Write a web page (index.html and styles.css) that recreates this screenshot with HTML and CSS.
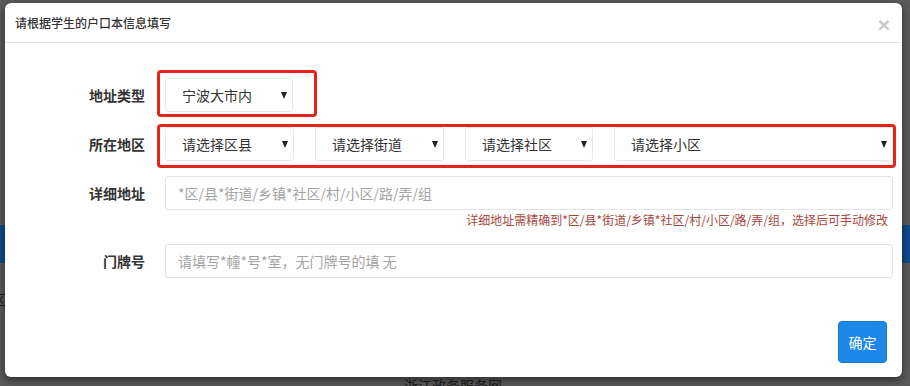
FILE: index.html
```html
<!DOCTYPE html>
<html lang="zh-CN">
<head>
<meta charset="utf-8">
<title>请根据学生的户口本信息填写</title>
<link rel="stylesheet" href="styles.css">
</head>
<body>
<div class="page">
  <div class="band"></div>
  <div class="page-side">区</div>
  <div class="page-footer">浙江政务服务网</div>
</div>

<div class="modal" role="dialog">
  <div class="modal-header">
    <h4 class="modal-title">请根据学生的户口本信息填写</h4>
    <button class="close" type="button">×</button>
  </div>
  <form class="modal-body">
    <div class="form-row row-type">
      <label class="form-label">地址类型</label>
      <div class="form-control-area">
        <span class="mark mark-type"></span>
        <span class="select-wrap w-type"><select class="select"><option>宁波大市内</option></select></span>
      </div>
    </div>
    <div class="form-row row-area">
      <label class="form-label">所在地区</label>
      <div class="form-control-area selects">
        <span class="mark mark-area"></span>
        <span class="select-wrap w-sm"><select class="select"><option>请选择区县</option></select></span>
        <span class="select-wrap w-sm"><select class="select"><option>请选择街道</option></select></span>
        <span class="select-wrap w-sm2"><select class="select"><option>请选择社区</option></select></span>
        <span class="select-wrap w-grow"><select class="select"><option>请选择小区</option></select></span>
      </div>
    </div>
    <div class="form-row row-detail">
      <label class="form-label">详细地址</label>
      <div class="form-control-area">
        <input class="input" type="text" placeholder="*区/县*街道/乡镇*社区/村/小区/路/弄/组">
      </div>
    </div>
    <div class="hint">详细地址需精确到*区/县*街道/乡镇*社区/村/小区/路/弄/组，选择后可手动修改</div>
    <div class="form-row row-door">
      <label class="form-label">门牌号</label>
      <div class="form-control-area">
        <input class="input" type="text" placeholder="请填写*幢*号*室，无门牌号的填 无">
      </div>
    </div>
    <div class="actions">
      <button class="btn-primary" type="button">确定</button>
    </div>
  </form>
</div>
</body>
</html>
```

FILE: styles.css
```css
* { box-sizing: border-box; }
html, body {
  margin: 0;
  padding: 0;
}
body {
  width: 910px;
  height: 386px;
  overflow: hidden;
  background: #5a5a5a;
  font-family: "Noto Sans CJK SC", "Noto Sans", sans-serif;
  font-size: 14px;
  color: #333;
  position: relative;
}

/* background page (under backdrop) */
.page { width: 910px; }
.band {
  margin-top: 225px;
  height: 38px;
  background: #0f4a8a;
}
.page-side {
  margin-top: 26px;
  margin-left: -8px;
  line-height: 20px;
  color: #1c1c1c;
}
.page-footer {
  margin-top: 66px;
  padding-left: 404px;
  line-height: 20px;
  color: #1c1c1c;
}

/* modal */
.modal {
  position: absolute;
  left: 5px;
  top: 3px;
  width: 897px;
  height: 374px;
  background: #fff;
  border-radius: 6px;
  box-shadow: 0 3px 9px rgba(0, 0, 0, 0.5);
  display: flex;
  flex-direction: column;
}
.modal-header {
  height: 40px;
  border-bottom: 1px solid #e5e5e5;
  display: flex;
  align-items: center;
  justify-content: space-between;
  padding: 0 12px 0 10px;
}
.modal-title {
  margin: 0;
  font-size: 12px;
  font-weight: 500;
  color: #333;
  line-height: 20px;
  padding-top: 1px;
}
.close {
  border: 0;
  background: none;
  padding: 0;
  font-family: "Liberation Sans", Arial, sans-serif;
  font-size: 21px;
  font-weight: bold;
  color: #c8c8c8;
  line-height: 1;
  margin-top: 4px;
}

.modal-body {
  margin: 0;
  padding: 35px 9px 0 0;
  flex: 1;
  display: flex;
  flex-direction: column;
}
.form-row {
  display: grid;
  grid-template-columns: 140px 1fr;
  column-gap: 20px;
  align-items: center;
}
.row-area { margin-top: 15px; }
.row-detail { margin-top: 15px; }
.row-door { margin-top: 16px; }
.form-label {
  text-align: right;
  font-weight: bold;
  font-size: 14px;
  color: #333;
}
.form-control-area {
  position: relative;
  display: flex;
  height: 34px;
}
.selects { gap: 21px; }

.select-wrap {
  position: relative;
  display: block;
  height: 34px;
}
.select-wrap::after {
  content: "";
  position: absolute;
  right: 6px;
  top: 14px;
  border-left: 3.5px solid transparent;
  border-right: 3.5px solid transparent;
  border-top: 7px solid #222;
  pointer-events: none;
}
.w-type { width: 128px; }
.w-sm { width: 129px; }
.w-sm2 { width: 128px; }
.w-grow { flex: 1; }
.select {
  appearance: none;
  -webkit-appearance: none;
  width: 100%;
  height: 34px;
  border: 1px solid #e8e8e8;
  border-radius: 3px;
  background: #fff;
  padding: 0 20px 0 16px;
  font-family: inherit;
  font-size: 14px;
  color: #333;
}

.input {
  width: 100%;
  height: 34px;
  border: 1px solid #e3e3e3;
  border-radius: 3px;
  padding: 0 12px;
  font-family: inherit;
  font-size: 14px;
  color: #333;
  background: #fff;
}
.input::placeholder { color: #a3a3a3; }

.hint {
  margin-top: 2px;
  text-align: right;
  padding-right: 5px;
  font-size: 12px;
  line-height: 16px;
  color: #a8473e;
}

.actions {
  margin-top: auto;
  padding-bottom: 14px;
  display: flex;
  justify-content: flex-end;
  padding-right: 6px;
}
.btn-primary {
  width: 49px;
  height: 42px;
  border: 1px solid #1a76c9;
  border-radius: 4px;
  background: #1e88e8;
  color: #fff;
  font-family: inherit;
  font-size: 14px;
  padding: 0;
}

/* red annotation boxes drawn over the fields */
.mark {
  position: absolute;
  border: 3px solid #e2241b;
  border-radius: 4px;
  pointer-events: none;
}
.mark-type {
  left: -8px;
  top: -8px;
  width: 160px;
  height: 47px;
}
.mark-area {
  left: -8px;
  top: -3px;
  width: 739px;
  height: 44px;
}
```
